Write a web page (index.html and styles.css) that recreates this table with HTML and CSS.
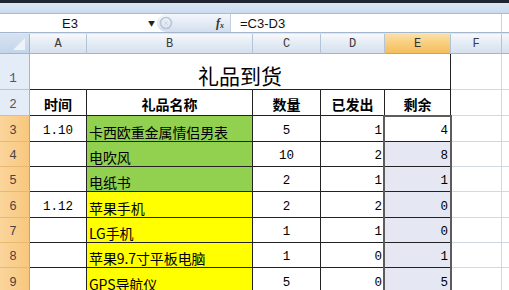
FILE: index.html
```html
<!DOCTYPE html>
<html>
<head>
<meta charset="utf-8">
<link rel="stylesheet" href="styles.css">
</head>
<body>
<div class="app">
  <div class="topbar"></div>
  <div class="ribbon"></div>
  <div class="fbar">
    <div class="namebox"><span class="nbtext">E3</span><span class="nbarrow">▼</span></div>
    <div class="pill">
      <svg class="cancel" width="14" height="14" viewBox="0 0 14 14"><circle cx="7" cy="7" r="5.5" fill="none" stroke="#b9c6d8" stroke-width="1.6"/><path d="M5 5 L9 9 M9 5 L5 9" stroke="#cdd6e3" stroke-width="1"/></svg>
      <span class="fx">f<sub>x</sub></span>
    </div>
    <div class="formula">=C3-D3</div>
  </div>
  <div class="fgap"></div>
  <div class="sheet">
    <div class="corner"><svg width="29" height="19" viewBox="0 0 29 19"><path d="M25 4 L25 16 L13 16 Z" fill="#eef3fa"/></svg></div>
    <div class="ch">A</div>
    <div class="ch">B</div>
    <div class="ch">C</div>
    <div class="ch">D</div>
    <div class="ch sel">E</div>
    <div class="ch">F</div>
    <div class="ch last"></div>

    <div class="rh">1</div>
    <div class="c title span5">礼品到货</div>
    <div class="g"></div><div class="g last"></div>

    <div class="rh">2</div>
    <div class="c hd center">时间</div>
    <div class="c hd center">礼品名称</div>
    <div class="c hd center">数量</div>
    <div class="c hd center">已发出</div>
    <div class="c hd center">剩余</div>
    <div class="g"></div><div class="g last"></div>

    <div class="rh sel">3</div>
    <div class="c num center">1.10</div>
    <div class="c name green">卡西欧重金属情侣男表</div>
    <div class="c num center">5</div>
    <div class="c num right">1</div>
    <div class="c num right active">4</div>
    <div class="g"></div><div class="g last"></div>

    <div class="rh sel">4</div>
    <div class="c"></div>
    <div class="c name green">电吹风</div>
    <div class="c num center">10</div>
    <div class="c num right">2</div>
    <div class="c num right selfill">8</div>
    <div class="g"></div><div class="g last"></div>

    <div class="rh sel">5</div>
    <div class="c"></div>
    <div class="c name green">电纸书</div>
    <div class="c num center">2</div>
    <div class="c num right">1</div>
    <div class="c num right selfill">1</div>
    <div class="g"></div><div class="g last"></div>

    <div class="rh sel">6</div>
    <div class="c num center">1.12</div>
    <div class="c name yellow">苹果手机</div>
    <div class="c num center">2</div>
    <div class="c num right">2</div>
    <div class="c num right selfill">0</div>
    <div class="g"></div><div class="g last"></div>

    <div class="rh sel">7</div>
    <div class="c"></div>
    <div class="c name yellow">LG手机</div>
    <div class="c num center">1</div>
    <div class="c num right">1</div>
    <div class="c num right selfill">0</div>
    <div class="g"></div><div class="g last"></div>

    <div class="rh sel">8</div>
    <div class="c"></div>
    <div class="c name yellow">苹果9.7寸平板电脑</div>
    <div class="c num center">1</div>
    <div class="c num right">0</div>
    <div class="c num right selfill">1</div>
    <div class="g"></div><div class="g last"></div>

    <div class="rh sel">9</div>
    <div class="c"></div>
    <div class="c name yellow">GPS导航仪</div>
    <div class="c num center">5</div>
    <div class="c num right">0</div>
    <div class="c num right selfill">5</div>
    <div class="g"></div><div class="g last"></div>

    <div class="selbox"></div>
  </div>
</div>
</body>
</html>
```

FILE: styles.css
```css
* { box-sizing: border-box; }
html, body { margin: 0; padding: 0; }
body { width: 509px; height: 290px; overflow: hidden; background: #fff; font-family: "Noto Sans CJK SC", sans-serif; }
.app { width: 509px; }
.topbar { height: 3px; background: #1e2430; }
.ribbon { height: 11px; background: linear-gradient(#dbe6f4, #cbdbef); border-bottom: 1px solid #a9bcd6; }
.fbar { height: 18px; display: flex; background: #fff; }
.namebox { width: 157px; display: flex; align-items: center; position: relative; }
.nbtext { width: 140px; text-align: center; font-family: "Liberation Sans", sans-serif; font-size: 13px; color: #111; }
.nbarrow { font-size: 7px; color: #222; margin-left: 8px; }
.pill { width: 74px; display: flex; align-items: center; justify-content: space-between; padding: 0 6px 0 2px;
  background: linear-gradient(#f4f7fb, #d3dfee); border-radius: 9px 0 0 9px; border-right: 1px solid #c3cfdf; }
.fx { font-family: "Liberation Serif", serif; font-style: italic; font-weight: bold; font-size: 12px; color: #333; }
.fx sub { font-size: 8px; vertical-align: -1px; }
.formula { flex: 1; padding-left: 9px; display: flex; align-items: center; font-family: "Liberation Sans", sans-serif; font-size: 13px; color: #111; border-right: 1px solid #c8d3e2; margin-right: 7px; }
.fgap { height: 2px; border-top: 1px solid #a4b6cd; background: #dde7f3; }
.sheet { position: relative; display: grid;
  grid-template-columns: 30px 57px 166px 68px 64px 66px 51px 7px;
  grid-template-rows: 20px 36px 26px 26px 25px 25px 26px 25px 25px 26px; }
.corner { background: linear-gradient(#d6e2f1, #c4d5ea); border-right: 1px solid #9eb6ce; border-bottom: 1px solid #9eb6ce; }
.corner svg { display: block; }
.ch { background: linear-gradient(#f7f9fc, #e2eaf4 55%, #d6e1ee); border-right: 1px solid #b1c4d9; border-bottom: 1px solid #9eb6ce;
  display: flex; align-items: center; justify-content: center; font-family: "Liberation Mono", monospace; font-size: 12px; color: #3a3a3a; }
.ch.sel { background: linear-gradient(#fbe0a8, #f8cc78 55%, #f4bd5e); border-bottom: 1px solid #e0a040; color: #333; }
.ch.last { border-right: none; }
.rh { background: #e4ecf7; border-right: 1px solid #9eb6ce; border-bottom: 1px solid #b1c4d9;
  display: flex; align-items: flex-end; justify-content: center; padding-bottom: 3px; padding-right: 3px;
  font-family: "Liberation Mono", monospace; font-size: 12.5px; color: #555; }
.rh.sel { background: linear-gradient(90deg, #fbd59c, #f8c77e); border-bottom-color: #e8b870; border-right-color: #e0a040; color: #444; }
.c { border-right: 1px solid #222; border-bottom: 1px solid #222; display: flex; align-items: flex-end; padding: 0 2px 2px 2px; color: #000; }
.g { border-right: 1px solid #d0d7e5; border-bottom: 1px solid #d0d7e5; }
.g.last { border-right: none; }
.span5 { grid-column: span 5; }
.title { justify-content: center; font-size: 21px; line-height: 26px; padding-bottom: 1px; }
.hd { font-weight: bold; font-size: 14px; line-height: 18px; padding-bottom: 2px; }
.center { justify-content: center; }
.right { justify-content: flex-end; }
.num { font-family: "Liberation Mono", monospace; font-size: 12.5px; line-height: 14px; padding-bottom: 3px; }
.name { font-size: 14px; line-height: 16px; padding-bottom: 1px; padding-left: 2px; letter-spacing: -0.1px; }
.green { background: #92d050; }
.yellow { background: #ffff00; }
.selfill { background: #e5e8f2; }
.active { background: #fff; }
.selbox { position: absolute; grid-column: 6 / 7; grid-row: 4 / 11; top: -1px; left: -2px; right: -1px; bottom: 0;
  border: 2px solid #5c5c5c; pointer-events: none; }
```
